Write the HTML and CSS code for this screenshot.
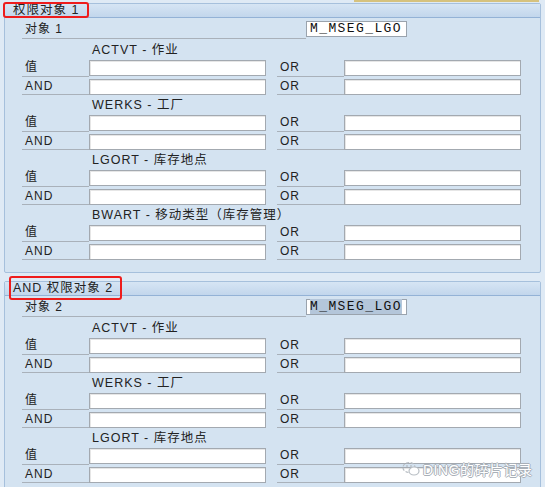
FILE: index.html
```html
<!DOCTYPE html>
<html lang="zh-CN">
<head>
    <meta charset="UTF-8">
    <title>权限对象</title>
    <link rel="stylesheet" href="styles.css">
</head>
<body>

    <div class="top-strip"></div>

    <div class="panel">
        <div class="panel-head">权限对象 1</div>
        <div class="mark mark-1"></div>
        <div class="panel-body">
            <div class="obj-row">
                <div class="obj-label">对象 1</div>
                <div class="obj-box">M_MSEG_LGO</div>
            </div>

            <div class="sect">
                <div class="sect-title">ACTVT - 作业</div>
                <div class="lbl">值</div><div class="fld"></div><div></div><div class="lbl">OR</div><div class="fld"></div>
                <div class="lbl">AND</div><div class="fld"></div><div></div><div class="lbl">OR</div><div class="fld"></div>
            </div>
            <div class="sect">
                <div class="sect-title">WERKS - 工厂</div>
                <div class="lbl">值</div><div class="fld"></div><div></div><div class="lbl">OR</div><div class="fld"></div>
                <div class="lbl">AND</div><div class="fld"></div><div></div><div class="lbl">OR</div><div class="fld"></div>
            </div>
            <div class="sect">
                <div class="sect-title">LGORT - 库存地点</div>
                <div class="lbl">值</div><div class="fld"></div><div></div><div class="lbl">OR</div><div class="fld"></div>
                <div class="lbl">AND</div><div class="fld"></div><div></div><div class="lbl">OR</div><div class="fld"></div>
            </div>
            <div class="sect">
                <div class="sect-title">BWART - 移动类型（库存管理）</div>
                <div class="lbl">值</div><div class="fld"></div><div></div><div class="lbl">OR</div><div class="fld"></div>
                <div class="lbl">AND</div><div class="fld"></div><div></div><div class="lbl">OR</div><div class="fld"></div>
            </div>
        </div>
    </div>

    <div class="panel panel-2">
        <div class="panel-head">AND 权限对象 2</div>
        <div class="mark mark-2"></div>
        <div class="panel-body">
            <div class="obj-row">
                <div class="obj-label">对象 2</div>
                <div class="obj-box"><span class="sel">M_MSEG_LGO</span></div>
            </div>

            <div class="sect">
                <div class="sect-title">ACTVT - 作业</div>
                <div class="lbl">值</div><div class="fld"></div><div></div><div class="lbl">OR</div><div class="fld"></div>
                <div class="lbl">AND</div><div class="fld"></div><div></div><div class="lbl">OR</div><div class="fld"></div>
            </div>
            <div class="sect">
                <div class="sect-title">WERKS - 工厂</div>
                <div class="lbl">值</div><div class="fld"></div><div></div><div class="lbl">OR</div><div class="fld"></div>
                <div class="lbl">AND</div><div class="fld"></div><div></div><div class="lbl">OR</div><div class="fld"></div>
            </div>
            <div class="sect">
                <div class="sect-title">LGORT - 库存地点</div>
                <div class="lbl">值</div><div class="fld"></div><div></div><div class="lbl">OR</div><div class="fld"></div>
                <div class="lbl">AND</div><div class="fld"></div><div></div><div class="lbl">OR</div><div class="fld"></div>
            </div>
        </div>
    </div>

    <div class="watermark">
        <svg width="18" height="16" viewBox="0 0 18 16">
            <ellipse cx="7" cy="6.5" rx="6" ry="5" fill="none" stroke="#b8bec4" stroke-width="1.2" stroke-dasharray="3 1.5"/>
            <ellipse cx="12" cy="10" rx="5" ry="4" fill="#fff" stroke="#b8bec4" stroke-width="1.2"/>
            <circle cx="5" cy="5" r="0.9" fill="#b8bec4"/>
            <circle cx="9" cy="5" r="0.9" fill="#b8bec4"/>
        </svg>
        <span class="wm-text">DING的碎片记录</span>
    </div>

</body>
</html>
```

FILE: styles.css
```css
body {
    margin: 0;
    background: #dfeaf5;
    font-family: "Liberation Sans", "Noto Sans CJK SC", sans-serif;
    font-size: 12px;
    color: #222;
    height: 487px;
    overflow: hidden;
    position: relative;
}
.top-strip {
    height: 2px;
    margin-left: 354px;
    margin-right: 6px;
    background: #d6c27e;
}
.panel {
    position: relative;
    margin: 1px 4px 0 4px;
    background: #d4e3f1;
    border: 1px solid #a6c0dc;
    border-radius: 2px;
}
.panel-2 {
    margin-top: 8px;
}
.panel-head {
    height: 13px;
    line-height: 13px;
    padding-left: 8px;
    font-size: 12.5px;
    letter-spacing: 1px;
    background: linear-gradient(#d6e5f4, #c2d6ec);
    border-bottom: 1px solid #93b2d6;
}
.panel-body {
    padding: 3px 0 11px 17px;
}
.mark {
    position: absolute;
    border: 2px solid #ee1c1c;
    border-radius: 3px;
}
.mark-1 {
    left: -2px;
    top: -2px;
    width: 82px;
    height: 12px;
}
.mark-2 {
    left: 4px;
    top: -6px;
    width: 109px;
    height: 20px;
}
.obj-row {
    display: flex;
    height: 18px;
    margin-bottom: 2px;
}
.obj-label {
    width: 284px;
    padding-left: 3px;
    box-sizing: border-box;
    line-height: 17px;
    letter-spacing: 1px;
    border-bottom: 1px solid #a9b1ba;
}
.obj-box {
    width: 101px;
    height: 16px;
    box-sizing: border-box;
    background: #fff;
    border: 1px solid #9aa3ad;
    font-family: "Liberation Mono", monospace;
    font-size: 13px;
    letter-spacing: 1.4px;
    line-height: 14px;
    padding-left: 3px;
    color: #111;
}
.sel {
    background: #b4c6da;
}
.sect {
    display: grid;
    grid-template-columns: 67px 177px 11px 67px 177px;
    grid-template-rows: 18px 18px 18px;
    margin-bottom: 1px;
}
.sect-title {
    grid-column: 2 / 6;
    padding-left: 3px;
    line-height: 18px;
    font-size: 12.5px;
    letter-spacing: 1px;
}
.lbl {
    padding-left: 3px;
    line-height: 17px;
    letter-spacing: 1px;
    border-bottom: 1px solid #a9b1ba;
}
.sect .lbl:nth-last-child(-n+5) {
    margin-top: 1px;
}
.fld {
    height: 16px;
    margin-top: 1px;
    box-sizing: border-box;
    background: #fff;
    border: 1px solid #a3a9b0;
    box-shadow: inset 1px 1px 0 #e6e6e6;
}
.sect .fld:nth-last-child(-n+5) {
    margin-top: 2px;
}
.watermark {
    position: absolute;
    left: 402px;
    top: 459px;
    display: flex;
    align-items: center;
    gap: 3px;
}
.wm-text {
    font-size: 14px;
    color: #ffffff;
    letter-spacing: 0.5px;
    text-shadow: 1px 0 0 #a9b0b8, -1px 0 0 #a9b0b8, 0 1px 0 #a9b0b8, 0 -1px 0 #a9b0b8;
}
```
